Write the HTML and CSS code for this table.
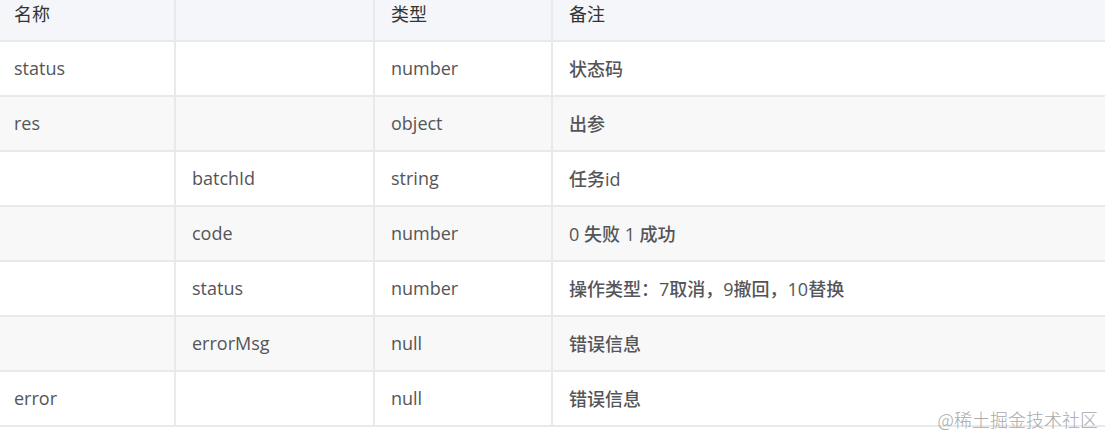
FILE: index.html
```html
<!DOCTYPE html>
<html lang="zh-CN">
<head>
<meta charset="utf-8">
<title>参数表</title>
<link rel="stylesheet" href="styles.css">
</head>
<body>
<div class="page">
  <div class="grid">
    <div class="cell head">名称</div><div class="cell head"></div><div class="cell head">类型</div><div class="cell head last">备注</div>

    <div class="cell">status</div><div class="cell"></div><div class="cell">number</div><div class="cell last">状态码</div>

    <div class="cell alt">res</div><div class="cell alt"></div><div class="cell alt">object</div><div class="cell alt last">出参</div>

    <div class="cell"></div><div class="cell">batchId</div><div class="cell">string</div><div class="cell last">任务id</div>

    <div class="cell alt"></div><div class="cell alt">code</div><div class="cell alt">number</div><div class="cell alt last">0 失败 1 成功</div>

    <div class="cell"></div><div class="cell">status</div><div class="cell">number</div><div class="cell last">操作类型：7取消，9撤回，10替换</div>

    <div class="cell alt"></div><div class="cell alt">errorMsg</div><div class="cell alt">null</div><div class="cell alt last">错误信息</div>

    <div class="cell">error</div><div class="cell"></div><div class="cell">null</div><div class="cell last">错误信息</div>
  </div>
  <div class="watermark">@稀土掘金技术社区</div>
</div>
</body>
</html>
```

FILE: styles.css
```css
html, body {
  margin: 0;
  padding: 0;
  background: #ffffff;
}

.page {
  position: relative;
  width: 1105px;
  height: 438px;
  overflow: hidden;
  font-family: "Open Sans", "Noto Sans CJK SC", sans-serif;
  font-size: 18px;
  font-weight: 500;
  color: #545558;
}

.grid {
  display: grid;
  grid-template-columns: 178px 199px 178px 1fr;
  grid-auto-rows: 55px;
  margin-top: -13px;
  margin-left: -2px;
}

.cell {
  box-sizing: border-box;
  display: flex;
  align-items: center;
  padding: 0 16px 2px;
  border-right: 2px solid #e7e9ed;
  border-bottom: 2px solid #e7e9ed;
  background: #ffffff;
  white-space: nowrap;
}

.cell.last {
  border-right: none;
}

.cell.alt {
  background: #f8f8f8;
}

.cell.head {
  background: #f5f6f9;
  color: #333333;
  font-weight: 400;
  padding-top: 0;
}

.watermark {
  position: absolute;
  right: 7px;
  top: 406px;
  font-family: "Noto Sans CJK SC", sans-serif;
  font-size: 18px;
  font-weight: 300;
  color: #a9a9a9;
}
```
